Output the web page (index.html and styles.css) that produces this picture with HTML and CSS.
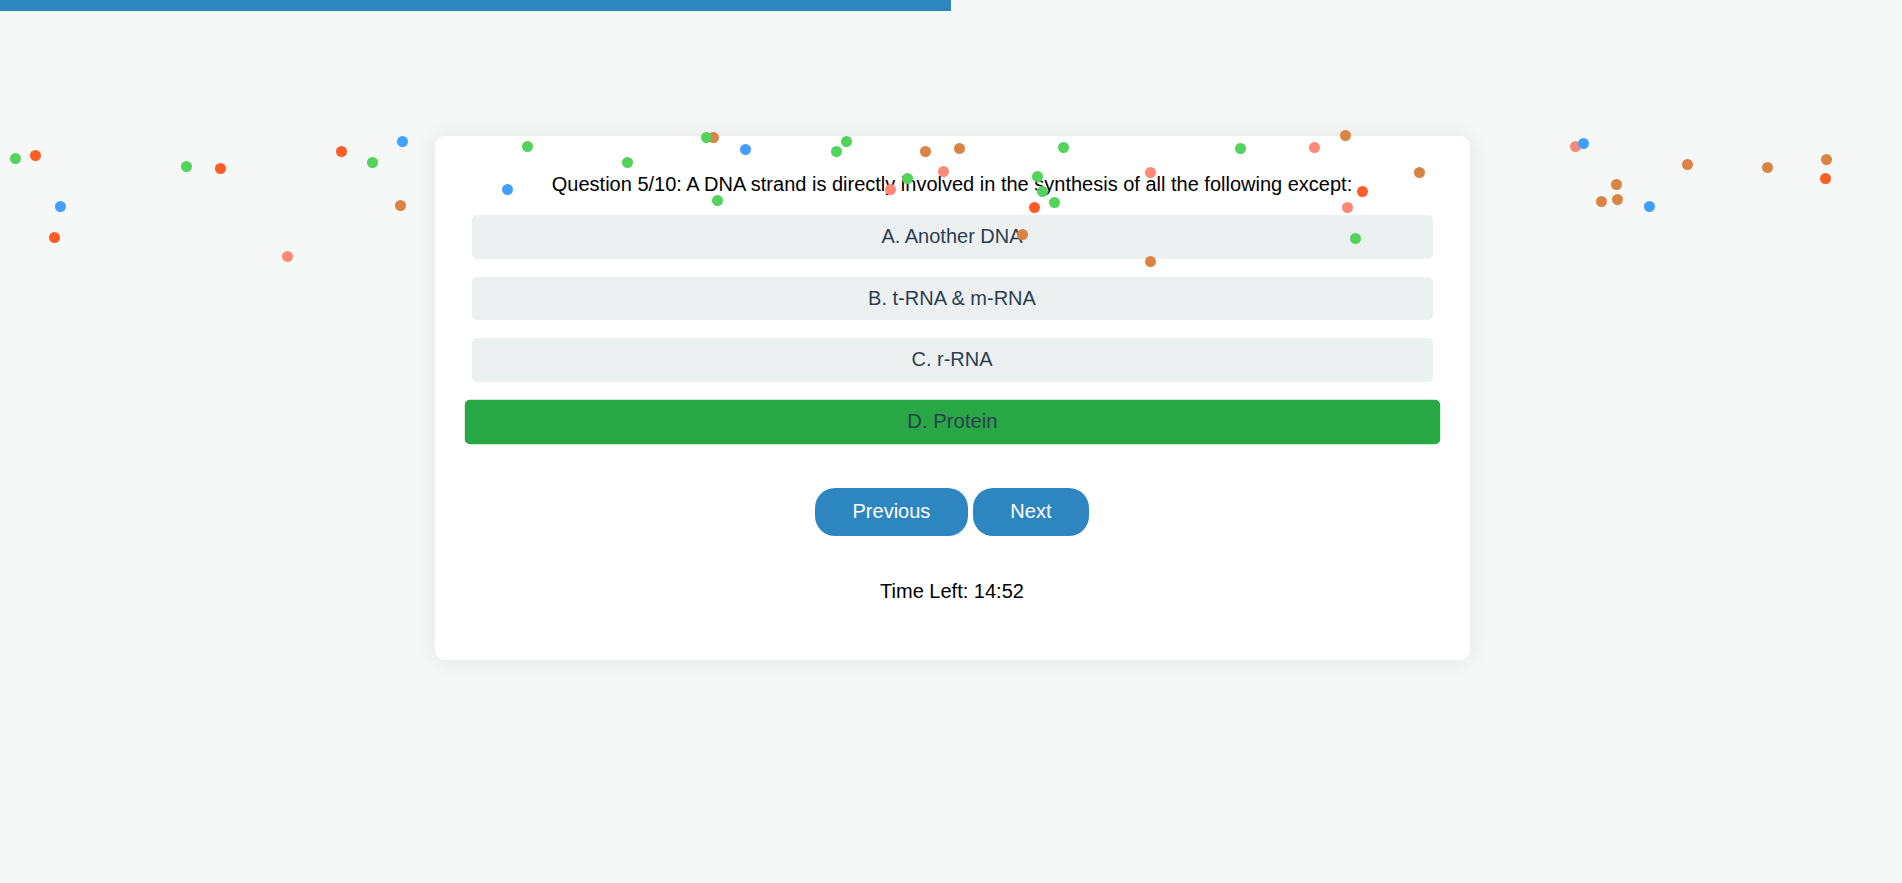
FILE: index.html
```html
<!DOCTYPE html>
<html lang="en">
<head>
<meta charset="utf-8">
<title>Quiz</title>
<link rel="stylesheet" href="styles.css">
</head>
<body>
<div class="progress"><div class="progress-fill" style="width: 50%"></div></div>
<main class="page">
  <section class="card">
    <p class="question">Question 5/10: A DNA strand is directly involved in the synthesis of all the following except:</p>
    <div class="options">
      <button class="option">A. Another DNA</button>
      <button class="option">B. t-RNA &amp; m-RNA</button>
      <button class="option">C. r-RNA</button>
      <button class="option option-correct">D. Protein</button>
    </div>
    <div class="nav">
      <button class="nav-btn">Previous</button>
      <button class="nav-btn">Next</button>
    </div>
    <p class="timer">Time Left: 14:52</p>
  </section>
</main>
<div class="confetti">
  <span class="dot g" style="left:9.7px;top:152.7px"></span>
  <span class="dot o" style="left:30.3px;top:150.3px"></span>
  <span class="dot b" style="left:54.7px;top:201.3px"></span>
  <span class="dot o" style="left:48.7px;top:232px"></span>
  <span class="dot g" style="left:181.3px;top:161.3px"></span>
  <span class="dot o" style="left:214.7px;top:162.7px"></span>
  <span class="dot s" style="left:282.3px;top:251px"></span>
  <span class="dot o" style="left:336px;top:145.7px"></span>
  <span class="dot g" style="left:366.7px;top:156.7px"></span>
  <span class="dot b" style="left:397.3px;top:136px"></span>
  <span class="dot br" style="left:394.7px;top:200.3px"></span>
  <span class="dot b" style="left:501.8px;top:184.3px"></span>
  <span class="dot g" style="left:521.8px;top:141px"></span>
  <span class="dot g" style="left:622.1px;top:157.3px"></span>
  <span class="dot br" style="left:707.9px;top:132px"></span>
  <span class="dot g" style="left:701.1px;top:131.7px"></span>
  <span class="dot b" style="left:739.6px;top:143.7px"></span>
  <span class="dot g" style="left:711.8px;top:194.7px"></span>
  <span class="dot g" style="left:831.4px;top:145.7px"></span>
  <span class="dot g" style="left:840.7px;top:136px"></span>
  <span class="dot br" style="left:920.4px;top:145.7px"></span>
  <span class="dot br" style="left:954.3px;top:143px"></span>
  <span class="dot s" style="left:937.9px;top:166.3px"></span>
  <span class="dot g" style="left:901.8px;top:172.7px"></span>
  <span class="dot s" style="left:885px;top:184.3px"></span>
  <span class="dot g" style="left:1057.8px;top:142px"></span>
  <span class="dot s" style="left:1144.7px;top:166.7px"></span>
  <span class="dot g" style="left:1031.9px;top:170.7px"></span>
  <span class="dot g" style="left:1037.1px;top:185.7px"></span>
  <span class="dot o" style="left:1028.9px;top:202.3px"></span>
  <span class="dot g" style="left:1048.5px;top:197px"></span>
  <span class="dot br" style="left:1017.1px;top:228.7px"></span>
  <span class="dot br" style="left:1144.7px;top:256.3px"></span>
  <span class="dot g" style="left:1235.4px;top:142.7px"></span>
  <span class="dot s" style="left:1309px;top:142.3px"></span>
  <span class="dot br" style="left:1339.7px;top:129.7px"></span>
  <span class="dot o" style="left:1356.7px;top:186px"></span>
  <span class="dot s" style="left:1342.3px;top:202.3px"></span>
  <span class="dot g" style="left:1350.4px;top:233.3px"></span>
  <span class="dot br" style="left:1414px;top:166.7px"></span>
  <span class="dot s" style="left:1569.7px;top:141.3px"></span>
  <span class="dot b" style="left:1578px;top:138px"></span>
  <span class="dot br" style="left:1611px;top:179px"></span>
  <span class="dot br" style="left:1596.3px;top:196.3px"></span>
  <span class="dot br" style="left:1612.3px;top:194.3px"></span>
  <span class="dot b" style="left:1644.3px;top:201.3px"></span>
  <span class="dot br" style="left:1682px;top:159px"></span>
  <span class="dot br" style="left:1761.7px;top:162px"></span>
  <span class="dot br" style="left:1821.3px;top:153.7px"></span>
  <span class="dot o" style="left:1820px;top:173.3px"></span>
</div>
</body>
</html>
```

FILE: styles.css
```css
* {
  box-sizing: border-box;
}

html, body {
  margin: 0;
  padding: 0;
}

body {
  background: #f6f8f8;
  font-family: "Liberation Sans", Arial, sans-serif;
  font-size: 20px;
  color: #000;
  min-height: 883px;
}

.progress {
  height: 11px;
  width: 100%;
}

.progress-fill {
  height: 100%;
  background: #2e86c1;
}

.page {
  padding-top: 125px;
  padding-left: 2px;
}

.card {
  width: 1035px;
  margin: 0 auto;
  background: #ffffff;
  border-radius: 10px;
  box-shadow: 0 0 22px rgba(0, 0, 0, 0.08);
  padding: 37px 37px 57px;
  text-align: center;
}

.question {
  margin: 0 0 19px;
  font-size: 20px;
  line-height: 23px;
  color: #000;
}

.options {
  display: flex;
  flex-direction: column;
  gap: 18px;
}

.option {
  display: block;
  width: 100%;
  border: none;
  border-radius: 5px;
  background: #ecf0f1;
  color: #2c3e50;
  font-family: inherit;
  font-size: 20px;
  line-height: 23.5px;
  padding: 10px;
  text-align: center;
}

.option-correct {
  background: #28a745;
  transform: scale(1.015);
}

.nav {
  display: flex;
  justify-content: center;
  gap: 5px;
  margin-top: 45px;
}

.nav-btn {
  border: none;
  border-radius: 20px;
  background: #2e86c1;
  color: #ffffff;
  font-family: inherit;
  font-size: 20px;
  line-height: 23.5px;
  padding: 12px 37.5px;
}

.timer {
  margin: 44px 0 0;
  font-size: 20px;
  line-height: 23px;
  color: #000;
}

.confetti {
  position: absolute;
  left: 0;
  top: 0;
  width: 100%;
  height: 100%;
  pointer-events: none;
}

.dot {
  position: absolute;
  width: 11px;
  height: 11px;
  border-radius: 50%;
}

.dot.g { background: #52d35b; }
.dot.o { background: #ff5c26; }
.dot.b { background: #42a0fd; }
.dot.br { background: #da8444; }
.dot.s { background: #ff8877; }
```
